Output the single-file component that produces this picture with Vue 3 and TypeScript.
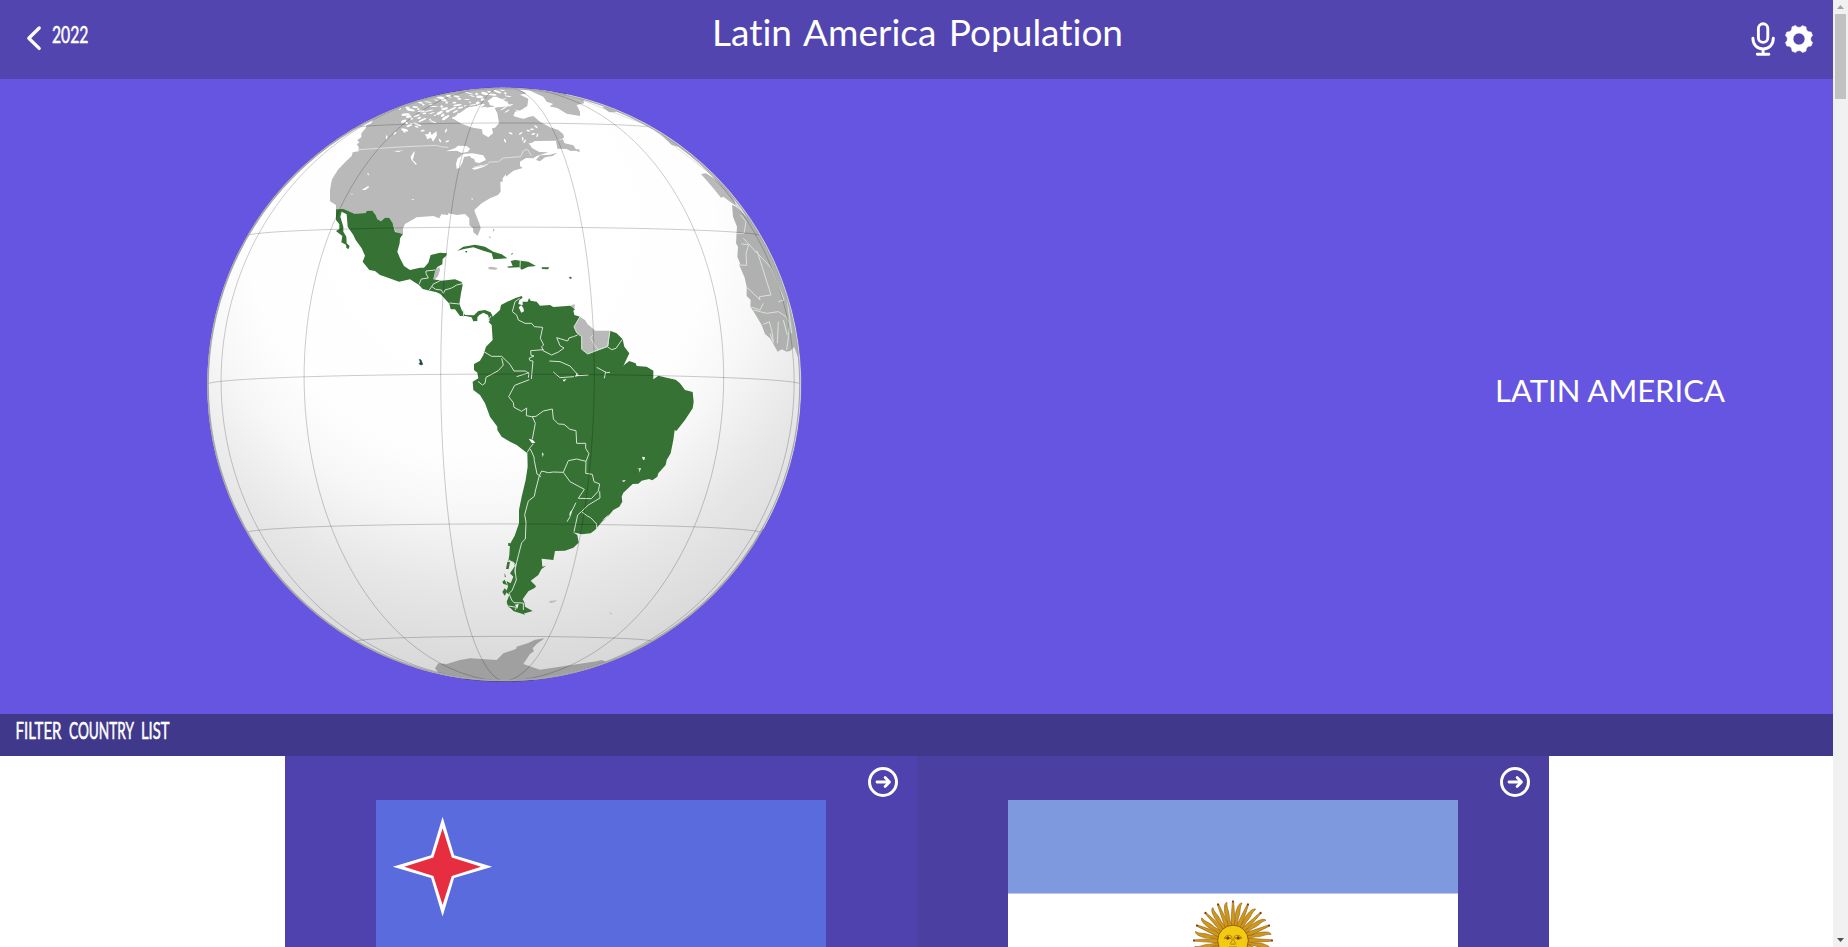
<script setup lang="ts">
interface Pt { x: number; y: number }

// Orthographic globe, drawn at three units per pixel.
const C: Pt = { x: 912, y: 913.5 }
const R = 891
const LAT0 = (-2 * Math.PI) / 180

function project(lat: number, dLon: number): Pt | null {
  const p = (lat * Math.PI) / 180
  const l = (dLon * Math.PI) / 180
  const visible = Math.sin(LAT0) * Math.sin(p) + Math.cos(LAT0) * Math.cos(p) * Math.cos(l)
  if (visible < 0) return null
  return {
    x: C.x + R * Math.cos(p) * Math.sin(l),
    y: C.y - R * (Math.cos(LAT0) * Math.sin(p) - Math.sin(LAT0) * Math.cos(p) * Math.cos(l)),
  }
}

function trace(points: (Pt | null)[]): string {
  let d = ''
  let pen = false
  for (const q of points) {
    if (!q) { pen = false; continue }
    d += `${pen ? 'L' : 'M'}${q.x.toFixed(1)} ${q.y.toFixed(1)}`
    pen = true
  }
  return d
}

const graticule: string[] = []
for (const lon of [-102.3, -72.3, -42.3, -12.3, 17.7, 47.7, 77.7, 107.7]) {
  graticule.push(trace(Array.from({ length: 91 }, (_, i) => project(-90 + i * 2, lon))))
}
for (const lat of [-60, -30, 0, 30, 59.7]) {
  graticule.push(trace(Array.from({ length: 121 }, (_, i) => project(lat, -120 + i * 2))))
}

// Small lakes and straits scattered over northern Canada.
const lakes = Array.from({ length: 84 }, (_, i) => {
  const x = 600 + ((i * 73) % 330)
  const limb = C.y - Math.sqrt(R * R - (x - C.x) ** 2)
  return {
    x, y: limb + 8 + ((i * 37) % 72), rx: 4 + (i % 5) * 2.2, ry: 1.6 + (i % 3) * 1.1,
    a: -35 + ((i * 29) % 60),
  }
})
const labradorLakes = [
  [996, 148], [1008, 140], [968, 176], [974, 184], [1000, 162], [932, 160], [915, 182], [1012, 166], [962, 160], [985, 152],
  [612, 154], [560, 172], [585, 160], [668, 152], [680, 166], [690, 160], [738, 152], [742, 184], [650, 140], [720, 182],
]

function gear(): string {
  const at = (deg: number, r: number) => {
    const a = (deg * Math.PI) / 180
    return `${(15 + r * Math.sin(a)).toFixed(2)} ${(15 - r * Math.cos(a)).toFixed(2)}`
  }
  let d = `M${at(15, 13.7)}`
  for (let k = 0; k < 8; k++) {
    const m = 22.5 + k * 45
    d += `L${at(m + 7.5, 14)}Q${at(m + 22.5, 9.6)} ${at(m + 37.5, 14)}`
  }
  return d + 'Z M15 9a6 6 0 1 0 0 12a6 6 0 1 0 0-12Z'
}
const gearPath = gear()
const rays = Array.from({ length: 32 }, (_, i) => ({ angle: i * 11.25, wavy: i % 2 === 1 }))
</script>

<template>
  <div class="window">
    <div class="page">
      <header class="topbar">
        <div class="back">
          <svg width="120" height="79" viewBox="0 0 120 79">
            <path d="M39.2 28 28.8 38.2 39.2 48.4" class="stroke" stroke-width="3.3" />
            <text class="narrow" x="52" y="43" font-size="23.5" textLength="36.5" lengthAdjust="spacingAndGlyphs">2022</text>
          </svg>
        </div>
        <svg class="title" width="420" height="79" viewBox="0 0 420 79">
          <text x="5" y="46" font-size="37.5" word-spacing="3" textLength="411" lengthAdjust="spacingAndGlyphs">Latin America Population</text>
        </svg>
        <div class="tools">
          <svg width="30" height="44" viewBox="0 0 30 44">
            <rect x="10.4" y="8.8" width="9.4" height="18.6" rx="4.7" class="stroke" stroke-width="2.9" />
            <path d="M4.9 23.3c0 6.5 4.2 10.7 10.2 10.7s10.2-4.2 10.2-10.7M15.1 34v5M9.3 39.2h11.6" class="stroke" stroke-width="2.9" />
          </svg>
          <svg width="30" height="30" viewBox="0 0 30 30">
            <path :d="gearPath" fill="#fff" fill-rule="evenodd" stroke="#fff" stroke-width=".6" stroke-linejoin="round" />
          </svg>
        </div>
      </header>

      <section class="hero">
        <svg class="globe" width="610" height="610" viewBox="0 0 1830 1830">
          <defs>
            <radialGradient id="shade" gradientUnits="userSpaceOnUse" cx="840" cy="430" r="1400">
              <stop offset="0" stop-color="#fff" />
              <stop offset=".5" stop-color="#fefefe" />
              <stop offset=".62" stop-color="#f7f7f7" />
              <stop offset=".78" stop-color="#e7e7e7" />
              <stop offset="1" stop-color="#d6d6d6" />
            </radialGradient>
            <clipPath id="disc"><circle cx="912" cy="913.5" r="890" /></clipPath>
          </defs>
          <circle cx="912" cy="913.5" r="890" fill="url(#shade)" />
          <g clip-path="url(#disc)">
            <g class="land">
              <path d="M408 388 408 375 390 364 390 330 393 312 396 298 415 268 436 246 455 228 458 217 476 214 476 202 470 192 478 188 472 180 484 172 484 160 497 145 500 136 514 130 520 118 600 60 900 0 930 80 955 95 968 115 1000 108 1020 125 1050 142 1075 150 1090 163 1092 173 1082 178 1070 182 1005 183 988 192 996 204 1018 216 1045 217 1010 228 1000 235 978 234 960 245 960 258 968 264 940 272 918 290 918 283 908 295 908 305 901 305 902 335 894 345 870 355 845 370 823 390 826 400 838 430 842 445 833 467 820 457 819 445 808 435 808 415 795 402 770 405 745 400 744 405 724 403 718 415 700 408 660 411 650 412 615 432 609 445 609 462 587 457 580 435 568 415 555 413 543 424 531 418 527 405 517 393 500 394 497 398 463 401 430 390Z" />
              <path d="M1068 183 1088 177 1094 190 1120 196 1128 208 1138 208 1139 217 1129 212 1112 213 1100 207 1072 206Z M1008 240 1020 226 1050 224 1072 218 1058 228 1035 232 1020 244Z" />
              <path d="M875 25 940 22 980 40 960 44 985 56 982 78 960 92 925 85 935 75 900 70 915 60 890 50 915 48 920 38Z M980 28 1020 28 1100 40 1150 55 1152 70 1130 75 1140 95 1140 108 1100 101 1072 84 1048 79 1060 72 1040 65 1030 50Z M1207 82 1225 80 1250 96 1228 97Z" />
              <path d="M1370 150 1395 165 1440 195 1495 245 1488 240 1460 218 1435 200 1415 195Z" />
              <path d="M1503 282 1518 280 1545 297 1575 323 1600 355 1608 378 1592 367 1570 350 1563 353 1540 325Z" />
              <path class="africa" d="M1596 375 1609 380 1650 420 1750 550 1830 800 1799 845 1782 800 1772 812 1760 815 1745 808 1733 815 1710 775 1695 762 1685 735 1662 697 1651 680 1652 660 1640 648 1640 620 1634 593 1618 556 1620 550 1612 530 1614 500 1608 490 1611 440 1599 410Z" />
              <path d="M706 569 718 561 720 570 714 588 705 598 701 597Z M863 563 874 560 893 564 888 569 868 568Z M1112 677 1124 672 1124 683 1113 683Z M866 468 873 472 870 476Z M880 445 884 451 878 455Z" />
              <path d="M1140 710 1155 720 1163 733 1186 752 1229 752 1228 775 1222 798 1190 810 1163 822 1145 808 1146 770 1130 758 1122 740Z" />
              <path d="M1048 1563 1072 1561 1062 1567 1050 1569Z M1228 1597 1235 1599 1234 1606Z" />
            </g>
            <path class="antarctica" d="M705 1765 715 1750 740 1752 780 1740 810 1735 890 1740 910 1720 948 1707 950 1700 985 1689 1005 1679 1034 1675 1010 1692 998 1705 1002 1714 990 1722 970 1752 1020 1769 1100 1757 1190 1744 1205 1740 1220 1746 1235 1742 1200 1830 800 1830 720 1785Z" />
            <g fill="#fff">
              <path d="M757 115 775 102 800 85 825 78 850 83 882 80 892 100 897 130 885 143 876 145 879 160 865 172 848 162 846 148 812 142 782 130Z M864 62 880 50 900 55 922 67 930 78 900 82 870 76Z M940 108 945 95 970 90 993 107 972 116 960 114Z" />
              <path d="M738 214 765 205 774 197 800 198 810 206 804 215 786 219 770 212Z M780 230 788 222 817 220 850 226 858 240 838 249 826 247 822 236 815 235 809 228 792 231 788 247 778 265 770 266 768 252 773 235Z M815 266 834 257 866 252 852 260 825 269Z" />
              <path d="M678 165 692 157 695 165 709 154 711 166 699 185 693 173 681 178Z M985 190 1048 187 1070 195 1066 210 1050 217 1032 214 1012 206Z" />
              <path d="M485 330 504 318 508 321 496 330Z M452 341 459 341 456 344Z M632 230 643 213 644 220 638 240 651 252 647 254 634 239Z M580 213 600 212 612 210 595 216Z M813 357 818 354 818 360Z M634 358 642 357 639 361Z M501 281 506 279 506 287Z" />
              <ellipse v-for="(l, i) in lakes" :key="i" :cx="l.x" :cy="l.y" :rx="l.rx" :ry="l.ry" :transform="`rotate(${l.a} ${l.x} ${l.y})`" />
              <ellipse v-for="(l, i) in labradorLakes" :key="'l' + i" :cx="l[0]" :cy="l[1]" rx="6" ry="2.4" :transform="`rotate(${i * 41} ${l[0]} ${l[1]})`" />
            </g>
            <g class="green">
              <path d="M408 388 430 387 463 401 497 399 500 393 517 392 527 405 532 418 543 424 555 413 568 414 578 430 585 456 609 462 600 475 599 490 592 515 600 535 612 558 630 570 660 563 672 563 685 548 692 525 720 518 741 520 738 528 728 537 727 553 713 560 706 570 700 598 725 602 765 598 785 606 788 615 783 640 778 671 785 690 795 705 822 706 835 693 855 690 872 697 880 713 870 727 864 705 850 698 838 705 832 712 832 723 820 724 815 712 797 708 780 708 765 688 752 688 748 671 735 657 722 643 710 637 690 632 668 627 657 615 630 598 597 605 560 592 540 585 525 573 508 570 488 545 495 527 485 505 467 480 460 465 443 440 440 403 425 395 421 410 430 440 430 455 439 470 440 490 449 498 445 508 439 503 438 494 424 487 427 468 408 453 418 447 418 433 408 420Z" />
              <path d="M772 512 790 500 825 494 855 500 880 515 905 523 922 535 880 538 875 520 850 512 820 502 796 506Z M921 560 938 558 932 543 945 540 985 545 1008 558 985 560 965 569 958 562 925 563Z M1025 562 1048 562 1044 568 1026 567Z M1107 591 1113 590 1116 595 1110 597Z M932 522 940 519 936 524Z M795 513 802 513 799 519Z M900 527 920 534 902 537Z" />
              <path d="M865 725 873 722 880 708 900 690 903 675 920 666 945 655 965 648 968 653 958 660 955 672 968 676 968 665 983 665 987 654 992 662 1010 665 1020 677 1050 675 1060 681 1110 677 1125 688 1120 692 1123 705 1140 710 1122 740 1130 758 1145 770 1145 806 1163 822 1200 808 1225 798 1230 752 1250 760 1268 778 1273 800 1288 820 1270 858 1275 853 1288 843 1307 850 1310 858 1340 860 1360 872 1360 898 1375 887 1400 893 1427 899 1440 910 1455 930 1478 936 1481 965 1478 985 1455 1020 1429 1053 1424 1050 1420 1080 1412 1120 1400 1140 1397 1155 1375 1180 1372 1190 1357 1201 1347 1197 1325 1202 1315 1211 1298 1212 1270 1238 1265 1250 1267 1265 1258 1280 1240 1290 1225 1308 1206 1325 1185 1350 1172 1360 1145 1363 1119 1357 1132 1365 1136 1388 1120 1403 1095 1412 1065 1413 1060 1440 1040 1438 1025 1436 1027 1460 1038 1457 1024 1468 1015 1485 992 1502 1008 1518 1005 1523 985 1534 968 1558 973 1567 975 1580 998 1593 975 1600 940 1590 925 1580 920 1565 928 1545 918 1535 924 1520 920 1503 932 1510 940 1490 930 1480 945 1458 940 1445 925 1442 928 1425 930 1392 944 1367 957 1330 957 1290 965 1250 977 1200 983 1160 982 1120 950 1095 930 1085 905 1070 892 1050 892 1040 870 1010 855 970 840 945 820 930 818 905 835 895 832 878 822 870 822 852 840 842 850 825 858 800 878 780 875 735Z" />
              <path d="M922 1445 930 1446 926 1467 918 1467Z M907 1505 914 1499 922 1515 910 1512Z M907 1536 914 1525 922 1534 914 1547Z M920 1570 965 1585 975 1604 940 1593Z M924 1389 931 1390 930 1398 925 1398Z M914 1478 918 1492 914 1490Z" />
            </g>
            <g class="holes">
              <path d="M956 682 964 676 970 684 972 694 964 698Z M986 1076 998 1079 1006 1088 996 1090Z M1026 1117 1031 1122 1028 1132Z M1326 1130 1335 1132 1333 1140 1329 1139Z M1311 1167 1323 1164 1318 1178 1318 1168Z M1265 1202 1277 1200 1272 1206Z M1110 1296 1116 1290 1113 1306 1108 1306Z M1205 1322 1228 1302 1220 1313Z M1130 878 1138 887 1125 890Z M1088 899 1100 897 1092 905Z M945 1574 956 1572 952 1586Z" />
            </g>
            <g class="borders">
              <path d="M474 209 600 201 710 196 722 200 745 202 M820 262 860 255 868 246 895 245 910 234 962 230 970 212 983 208 994 228" />
              <path d="M657 613 664 597 685 594 678 580 678 573 705 570 M688 630 700 612 715 605 722 601 M696 620 707 628 724 630 730 640 735 630 755 624 770 615 787 611 M748 669 778 672 M791 690 790 711 M865 720 873 708" />
              <path d="M959 655 945 665 937 695 950 705 955 720 975 730 995 730 1003 740 1028 742 1021 775 1031 795 1025 800 1029 812 1055 825 1075 816 1092 804 1080 797 1070 773 1103 783 1107 774 1120 770 1133 765" />
              <path d="M1031 809 992 812 993 826 1002 828 987 835 990 842 999 843 994 897 M850 814 875 829 905 829 930 853 942 873 976 873 987 880 985 893 M905 835 910 855 895 872 858 892 855 910 847 915 834 904 M987 878 950 890 M988 899 944 916 926 950 940 968 942 982 965 994 980 984 979 1007 995 1010 1008 1009 1030 993 1057 987 1060 1017 1075 1032 1092 1033 1110 1048 1128 1052 1130 1090 1157 1090 1157 1105 1167 1121 1158 1144 1130 1137 1105 1142 1090 1177 1060 1176 1045 1178 1025 1173 1018 1187 1006 1233 1003 1249 985 1263 974 1304 978 1326 976 1377 965 1388 956 1423 950 1447 945 1470 949 1500 936 1532 927 1540 935 1560 942 1568 970 1569 970 1590 M997 1010 1006 1030 997 1077 M1000 1091 991 1102 981 1118 M991 1107 1002 1131 1003 1142 1011 1182 1023 1190 M1158 1144 1157 1180 1177 1183 1182 1205 1199 1212 1195 1233 1174 1256 1135 1255 1153 1228 1110 1205 1090 1177 M1199 1234 1200 1254 1165 1275 1144 1295 1133 1305 1122 1355 M1146 1296 1162 1308 1172 1313 1190 1332 1190 1345 M1128 1268 1112 1300 1110 1310 1101 1325" />
              <path d="M1140 710 1122 740 1130 758 1145 770 1145 808 1163 822 1200 808 1222 800 1230 752 M1179 765 1171 773 1183 795 1196 810 M1222 800 1235 809 1248 805 1267 778 M1048 843 1080 845 1110 858 1136 887 1165 885 M1060 876 1080 893 1122 890 M961 540 960 564 M1190 862 1205 870 1220 878 1230 877 M1217 875 1213 895" />
              <path d="M927 1440 947 1453 945 1480 M925 1578 950 1582 945 1590" />
              <path d="M1622 405 1638 425 1632 460 1611 460 M1630 475 1715 565 1752 660 1735 665 M1624 492 1646 494 1638 520 1640 556 1618 555 M1664 515 1672 515 1713 645 1678 650 1680 660 1660 640 1640 622 M1650 680 1680 690 1690 670 M1660 690 1700 700 1735 695 1758 710 1770 735 1760 810 M1690 733 1708 725 1716 755 1720 785 M1735 725 1732 790 M1750 720 1762 765 M1762 660 1775 760 M1720 790 1710 760" />
            </g>
            <path class="limbland" d="M520 110 690 50 860 24 M1000 30 1120 50 1350 140 1580 320 M1540 285 1680 460 1740 590" />
          </g>
          <path d="M658 838 663 840 668 853 663 855 657 851 661 847Z" fill="#1b4547" stroke="#1b4547" stroke-width="2" />
          <g class="grid"><path v-for="(d, i) in graticule" :key="i" :d="d" /></g>
          <circle cx="912" cy="913.5" r="888" fill="none" stroke="#a7a7a7" stroke-width="5" />
          <path d="M1100 43A890 890 0 0 1 1690 1346" fill="none" stroke="#fff" stroke-width="2" stroke-opacity=".75" />
        </svg>
        <svg class="region" width="250" height="60" viewBox="0 0 250 60">
          <text x="6" y="42" font-size="31" textLength="230" lengthAdjust="spacingAndGlyphs">LATIN AMERICA</text>
        </svg>
      </section>

      <div class="filter">
        <svg width="260" height="42" viewBox="0 0 260 42">
          <text class="narrow" x="15.5" y="25" font-size="23.5" textLength="38.5" lengthAdjust="spacingAndGlyphs">
            <tspan x="15.5" textLength="46" lengthAdjust="spacingAndGlyphs">FILTER</tspan>
            <tspan x="69" textLength="65" lengthAdjust="spacingAndGlyphs">COUNTRY</tspan>
            <tspan x="141" textLength="28.5" lengthAdjust="spacingAndGlyphs">LIST</tspan>
          </text>
        </svg>
      </div>

      <main class="cards">
        <article v-for="name in ['aruba', 'argentina']" :key="name" class="card" :class="name">
          <div class="card-head">
            <svg width="32" height="32" viewBox="0 0 32 32">
              <circle cx="16" cy="16" r="13.5" class="stroke" stroke-width="3" />
              <path d="M10 16h11.8M18.1 11.6 22.5 16 18.1 20.4" class="stroke" stroke-width="2.8" />
            </svg>
          </div>
          <svg v-if="name === 'aruba'" class="flag" width="450" height="300" viewBox="0 0 450 300">
            <rect width="450" height="300" fill="#5a6bdd" />
            <path fill="#fff" d="M66.6 16.8 78.1 55.3 116.3 66.7 78.1 78.1 66.6 116.4 55.1 78.1 16.8 66.7 55.1 55.3Z" />
            <path fill="#e72e41" d="M66.6 28.3 75.8 57.5 105 66.7 75.8 75.9 66.6 105 57.4 75.9 28.3 66.7 57.4 57.5Z" />
          </svg>
          <svg v-else class="flag" width="450" height="281" viewBox="0 0 450 281">
            <rect width="450" height="281" fill="#fff" />
            <rect width="450" height="93.5" fill="#7f99df" />
            <g transform="translate(225 140.5)">
              <g v-for="r in rays" :key="r.angle" :transform="`rotate(${r.angle})`">
                <path v-if="r.wavy" d="M-2.2-15C-.4-21-3.5-25-2.6-30C-2.1-34-1.5-38 1.5-38.6C-.2-34 1.8-30 1.2-26C.7-22 .5-19 2-15Z" class="ray" />
                <path v-else d="M-2.3-15-.6-39.5H.6L2.3-15Z" class="ray" />
                <circle v-if="!r.wavy" cy="-39" r="1" fill="#85340a" />
              </g>
              <circle r="15.3" fill="#f2cb10" stroke="#9a5b13" stroke-width="1" />
              <g fill="none" stroke="#9b6817" stroke-width=".75">
                <path d="M-9-2.3Q-6-7-1.5-4.3Q-.8-3-.9 0L-2.8 3M9-2.3Q6-7 1.5-4.3Q.8-3 .9 0L2.8 3M-8.5-2.2Q-5-5-2-2.2Q-5-.3-8.5-2.2M8.5-2.2Q5-5 2-2.2Q5-.3 8.5-2.2M-2.8 3.6H2.8M-4 6.5H4" />
              </g>
              <g fill="#85340a"><circle cx="-5.2" cy="-2.5" r="1.4" /><circle cx="5.2" cy="-2.5" r="1.4" /></g>
            </g>
          </svg>
        </article>
      </main>
    </div>

    <div class="scrollbar">
      <svg width="15" height="14" viewBox="0 0 15 14"><path d="M4 9 7.5 5 11 9Z" fill="#a3a3a3" /></svg>
      <div class="thumb"></div>
      <svg class="down" width="15" height="14" viewBox="0 0 15 14"><path d="M4 5 7.5 9 11 5Z" fill="#505050" /></svg>
    </div>
  </div>
</template>

<style>
body { margin: 0; overflow: hidden; }
</style>

<style scoped>
.window { display: flex; width: 1848px; height: 947px; overflow: hidden; background: #fff; font-family: "Gill Sans", "Gill Sans MT", Lato, sans-serif; font-variant-ligatures: none; }
.page { width: 1833px; height: 947px; overflow: hidden; }
svg { display: block; flex: none; }
text { fill: #fff; }
.narrow { stroke: #fff; stroke-width: .55px; }
.stroke { fill: none; stroke: #fff; stroke-linecap: round; stroke-linejoin: round; }
.topbar { display: grid; grid-template-columns: 1fr 420px 1fr; height: 79px; background: #5245af; }
.tools { display: flex; justify-content: flex-end; align-items: flex-start; gap: 6px; padding: 15px 19px 0 0; }
.tools svg:last-child { margin-top: 9px; }
.hero { display: flex; justify-content: space-between; height: 635px; background: #6655e0; }
.globe { margin: 1px 0 0 200px; }
.region { margin: 281px 94.5px 0 0; }
.filter { height: 42px; background: #40388a; }
.cards { display: flex; justify-content: center; width: 1834px; }
.card { width: 632px; height: 400px; background: #4f42ae; }
.argentina { background: #4b3fa2; }
.card-head { display: flex; justify-content: flex-end; height: 34px; padding: 10px 18px 0 0; }
.flag { margin: 0 auto; }
.land { fill: #b9b9b9; }
.africa { fill: #b0b0b0; }
.antarctica { fill: #a0a0a0; }
.green { fill: #357233; }
.holes { fill: #fff; }
.borders { fill: none; stroke: #d7e3d6; stroke-width: 3; stroke-linejoin: round; }
.grid { fill: none; stroke: #000; stroke-opacity: .2; stroke-width: 3; }
.limbland { fill: none; stroke: #999; stroke-opacity: .3; stroke-width: 3; }
.ray { fill: #cf9816; stroke: #94601d; stroke-width: .6; }
.scrollbar { display: flex; flex-direction: column; width: 15px; height: 947px; background: #f1f1f1; }
.thumb { width: 11px; height: 85px; margin-left: 2px; background: #c1c1c1; }
.down { margin-top: auto; }
</style>
